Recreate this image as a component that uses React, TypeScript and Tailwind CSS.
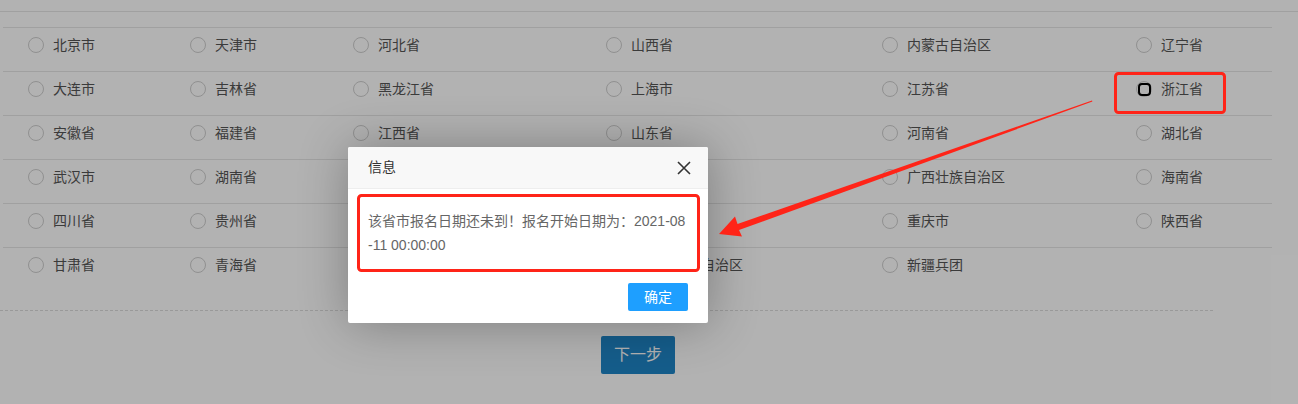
import React from "react";

const rows: string[][] = [
  ["北京市", "天津市", "河北省", "山西省", "内蒙古自治区", "辽宁省"],
  ["大连市", "吉林省", "黑龙江省", "上海市", "江苏省", "浙江省"],
  ["安徽省", "福建省", "江西省", "山东省", "河南省", "湖北省"],
  ["武汉市", "湖南省", "广东省", "深圳市", "广西壮族自治区", "海南省"],
  ["四川省", "贵州省", "云南省", "西藏自治区", "重庆市", "陕西省"],
  ["甘肃省", "青海省", "宁夏回族自治区", "新疆维吾尔自治区", "新疆兵团", ""],
];

function Radio({ focused }: { focused?: boolean }) {
  return (
    <span className="relative flex h-4 w-4 shrink-0 items-center justify-center rounded-full border border-[#cfcfcf] bg-white">
      {focused && (
        <span className="absolute h-[13px] w-[13px] rounded-[4px] border-2 border-black" />
      )}
    </span>
  );
}

function Annotations() {
  // red marks drawn over the screenshot
  return (
    <svg
      className="pointer-events-none absolute left-0 top-0"
      width={1298}
      height={404}
      viewBox="0 0 1298 404"
    >
      <rect x={1115.5} y={73.5} width={109} height={39} rx={3} fill="none" stroke="#ff2418" strokeWidth={3} />
      <rect x={358.5} y={195.5} width={340} height={75} rx={3} fill="none" stroke="#ff2418" strokeWidth={3} />
      <polygon
        fill="#ff2418"
        points="1092,100.5 1092.4,101.6 739,230 742,236.5 719,234 735,216.5 737.5,224"
      />
    </svg>
  );
}

export default function App() {
  return (
    <div className="relative h-[404px] w-[1298px] overflow-hidden bg-white font-['Liberation_Sans','Noto_Sans_CJK_SC',sans-serif]">
      <div className="h-[12px] border-b border-[#e6e6e6]" />

      <div className="ml-[3px] mt-[15px] w-[1269px]">
        {rows.map((row, i) => (
          <div
            key={i}
            className="grid h-[44px] grid-cols-[162px_163px_253px_276px_254px_161px] border-t border-[#e6e6e6]"
          >
            {row.map((name, j) => (
              <div key={j} className="flex h-5 items-center gap-[9px] pl-[25px] pt-[14px]">
                {name && (
                  <>
                    <Radio focused={name === "浙江省"} />
                    <span className="whitespace-nowrap text-[14px] leading-5 text-[#555]">{name}</span>
                  </>
                )}
              </div>
            ))}
          </div>
        ))}
      </div>

      <div className="mt-[19px] w-[1213px] border-t border-dashed border-[#dcdcdc]" />

      <button className="ml-[601px] mt-[25px] h-[38px] w-[74px] rounded-[2px] bg-[#1f86c7] text-[16px] text-white">
        下一步
      </button>

      {/* layer shade */}
      <div className="absolute inset-0 bg-black/30" />

      {/* dialog */}
      <div className="absolute left-[348px] top-[147px] w-[360px] rounded-[2px] bg-white shadow-[1px_1px_50px_rgba(0,0,0,0.3)]">
        <div className="flex h-[42px] items-center justify-between rounded-t-[2px] border-b border-[#eee] bg-[#f8f8f8] pl-[20px] pr-[17px]">
          <span className="text-[14px] text-[#333]">信息</span>
          <svg width="14" height="14" viewBox="0 0 14 14">
            <path d="M1 1 L13 13 M13 1 L1 13" stroke="#333" strokeWidth="1.6" />
          </svg>
        </div>
        <div className="break-all p-[20px] pt-[20px] text-[14px] leading-6 text-[#666]">
          该省市报名日期还未到！报名开始日期为：2021-08-11 00:00:00
        </div>
        <div className="flex justify-end px-[15px] pb-[12px]">
          <button className="mr-[5px] mt-[6px] h-[28px] rounded-[2px] bg-[#1e9fff] px-[16px] text-[14px] leading-7 text-white">
            确定
          </button>
        </div>
      </div>

      <Annotations />
    </div>
  );
}
